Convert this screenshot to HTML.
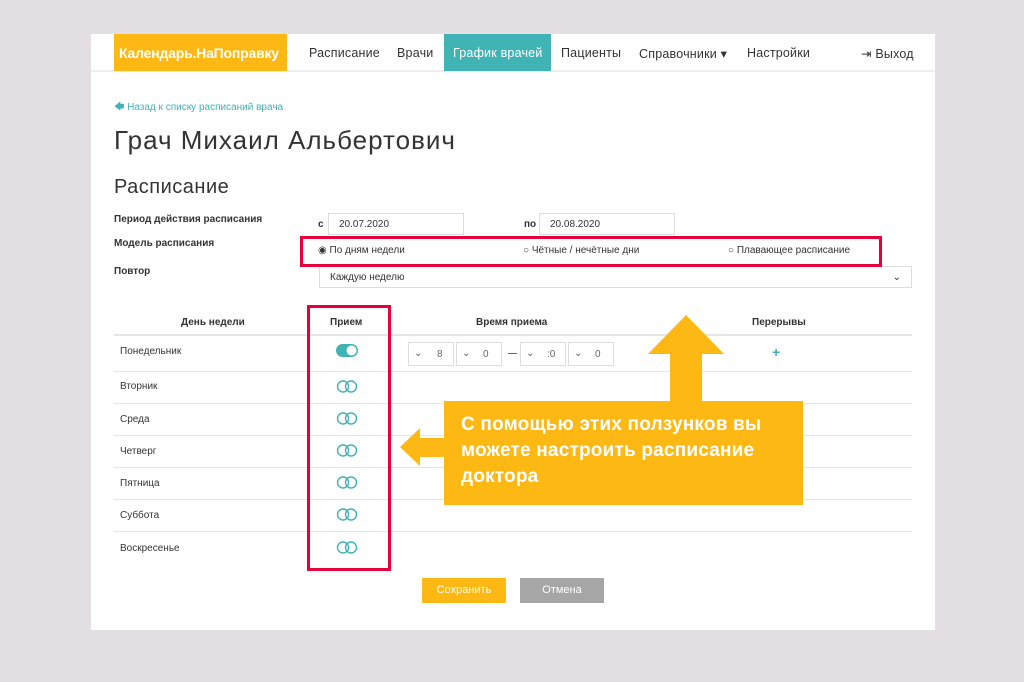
<!DOCTYPE html><html><head><meta charset="utf-8"><style>
*{margin:0;padding:0;box-sizing:border-box}
body{width:1024px;height:682px;background:#e3dfe3;font-family:"Liberation Sans",sans-serif;position:relative;overflow:hidden;color:#333}
.a{position:absolute}
.panel{left:91px;top:34px;width:844px;height:596px;background:#fff}
.nav{left:91px;top:34px;width:844px;height:38px;border-bottom:2px solid #eee}
.nav span{position:absolute;top:12px;font-size:12.5px;color:#333;letter-spacing:0.2px}
.t{font-size:11px;color:#333}
.b{font-weight:bold;font-size:10px;color:#333}
.in{border:1px solid #ddd;height:22px;font-size:10px;padding:5px 10px;color:#333;background:#fff}
.line{left:114px;width:798px;height:1px;background:#e6e6e6}
.tog{position:absolute;left:336px;width:22px;height:13px}
.sel{position:absolute;top:342px;width:46px;height:24px;border:1px solid #ddd;font-size:10px;color:#666}
.red{border:3px solid #e4003a}
</style></head><body>
<div class="a panel"></div>
<div class="a nav">
<div class="a" style="left:23px;top:0;width:173px;height:37px;background:#fdb813;color:#fff;font-size:14px;padding:11px 0 0 5px;font-weight:bold;letter-spacing:-0.2px">Календарь.НаПоправку</div>
<span style="left:218px">Расписание</span>
<span style="left:306px">Врачи</span>
<div class="a" style="left:353px;top:0;width:107px;height:37px;background:#40b3b5"></div>
<span style="left:362px;color:#fff">График врачей</span>
<span style="left:470px">Пациенты</span>
<span style="left:548px">Справочники ▾</span>
<span style="left:656px">Настройки</span>
<span style="left:770px">⇥ Выход</span>
</div>
<div class="a" style="left:114px;top:100px;font-size:10px;color:#40b3b5">🡄 Назад к списку расписаний врача</div>
<div class="a" style="left:114px;top:125px;font-size:26px;color:#333;letter-spacing:1px">Грач Михаил Альбертович</div>
<div class="a" style="left:114px;top:176px;font-size:20px;color:#333;letter-spacing:0.5px">Расписание</div>
<div class="a b" style="left:114px;top:214px">Период действия расписания</div>
<div class="a b" style="left:114px;top:238px">Модель расписания</div>
<div class="a b" style="left:114px;top:266px">Повтор</div>
<div class="a b" style="left:318px;top:219px">с</div>
<div class="a in" style="left:328px;top:213px;width:136px">20.07.2020</div>
<div class="a b" style="left:524px;top:219px">по</div>
<div class="a in" style="left:539px;top:213px;width:136px">20.08.2020</div>
<div class="a t" style="left:318px;top:245px;font-size:10px">◉ По дням недели</div>
<div class="a t" style="left:523px;top:245px;font-size:10px">○ Чётные / нечётные дни</div>
<div class="a t" style="left:728px;top:245px;font-size:10px">○ Плавающее расписание</div>
<div class="a in" style="left:319px;top:266px;width:593px">Каждую неделю<span style="float:right">⌄</span></div>
<div class="a red" style="left:300px;top:236px;width:582px;height:31px"></div>
<div class="a b" style="left:181px;top:317px">День недели</div>
<div class="a b" style="left:330px;top:317px">Прием</div>
<div class="a b" style="left:476px;top:317px">Время приема</div>
<div class="a b" style="left:752px;top:317px">Перерывы</div>
<div class="a line" style="top:334px;height:2px"></div>
<div class="a line" style="top:371px"></div><div class="a line" style="top:403px"></div><div class="a line" style="top:435px"></div><div class="a line" style="top:467px"></div><div class="a line" style="top:499px"></div><div class="a line" style="top:531px"></div>
<div class="a t" style="left:120px;top:346px;font-size:10px">Понедельник</div>
<div class="a t" style="left:120px;top:381px;font-size:10px">Вторник</div>
<div class="a t" style="left:120px;top:414px;font-size:10px">Среда</div>
<div class="a t" style="left:120px;top:446px;font-size:10px">Четверг</div>
<div class="a t" style="left:120px;top:478px;font-size:10px">Пятница</div>
<div class="a t" style="left:120px;top:510px;font-size:10px">Суббота</div>
<div class="a t" style="left:120px;top:543px;font-size:10px">Воскресенье</div>
<svg class="tog" style="top:344px" viewBox="0 0 22 13"><rect x="0" y="0" width="22" height="13" rx="6.5" fill="#40b3b5"/><circle cx="15.5" cy="6.5" r="5" fill="#fff"/></svg>
<svg class="tog" style="top:380px" viewBox="0 0 22 13"><circle cx="7" cy="6.5" r="5.5" fill="none" stroke="#40b3b5" stroke-width="1.4"/><circle cx="15" cy="6.5" r="5.5" fill="none" stroke="#40b3b5" stroke-width="1.4"/></svg>
<svg class="tog" style="top:412px" viewBox="0 0 22 13"><circle cx="7" cy="6.5" r="5.5" fill="none" stroke="#40b3b5" stroke-width="1.4"/><circle cx="15" cy="6.5" r="5.5" fill="none" stroke="#40b3b5" stroke-width="1.4"/></svg>
<svg class="tog" style="top:444px" viewBox="0 0 22 13"><circle cx="7" cy="6.5" r="5.5" fill="none" stroke="#40b3b5" stroke-width="1.4"/><circle cx="15" cy="6.5" r="5.5" fill="none" stroke="#40b3b5" stroke-width="1.4"/></svg>
<svg class="tog" style="top:476px" viewBox="0 0 22 13"><circle cx="7" cy="6.5" r="5.5" fill="none" stroke="#40b3b5" stroke-width="1.4"/><circle cx="15" cy="6.5" r="5.5" fill="none" stroke="#40b3b5" stroke-width="1.4"/></svg>
<svg class="tog" style="top:508px" viewBox="0 0 22 13"><circle cx="7" cy="6.5" r="5.5" fill="none" stroke="#40b3b5" stroke-width="1.4"/><circle cx="15" cy="6.5" r="5.5" fill="none" stroke="#40b3b5" stroke-width="1.4"/></svg>
<svg class="tog" style="top:541px" viewBox="0 0 22 13"><circle cx="7" cy="6.5" r="5.5" fill="none" stroke="#40b3b5" stroke-width="1.4"/><circle cx="15" cy="6.5" r="5.5" fill="none" stroke="#40b3b5" stroke-width="1.4"/></svg>
<div class="sel" style="left:408px"><span class="a" style="left:5px;top:5px">⌄</span><span class="a" style="left:28px;top:6px">8</span></div>
<div class="sel" style="left:456px"><span class="a" style="left:5px;top:5px">⌄</span><span class="a" style="left:26px;top:6px">0</span></div>
<div class="a" style="left:508px;top:353px;width:9px;height:1px;background:#666"></div>
<div class="sel" style="left:520px"><span class="a" style="left:5px;top:5px">⌄</span><span class="a" style="left:26px;top:6px">:0</span></div>
<div class="sel" style="left:568px"><span class="a" style="left:5px;top:5px">⌄</span><span class="a" style="left:26px;top:6px">0</span></div>
<div class="a" style="left:772px;top:344px;color:#40b3b5;font-weight:bold;font-size:14px">+</div>
<div class="a red" style="left:307px;top:305px;width:84px;height:266px"></div>
<div class="a" style="left:422px;top:578px;width:84px;height:25px;background:#fdb813;color:#fff;font-size:11px;text-align:center;padding-top:6px">Сохранить</div>
<div class="a" style="left:520px;top:578px;width:84px;height:25px;background:#a6a6a6;color:#fff;font-size:11px;text-align:center;padding-top:6px">Отмена</div>
<svg class="a" style="left:0;top:0" width="1024" height="682"><path d="M686 315 L724 354 L702 354 L702 402 L670 402 L670 354 L648 354 Z" fill="#fdb813"/><path d="M400 447 L420 428 L420 438 L445 438 L445 457 L420 457 L420 466 Z" fill="#fdb813"/></svg>
<div class="a" style="left:444px;top:401px;width:359px;height:104px;background:#fdb813;color:#fff;font-size:19px;line-height:26px;padding:11px 0 0 17px;font-weight:bold;letter-spacing:0.2px">С помощью этих ползунков вы<br>можете настроить расписание<br>доктора</div>
</body></html>
